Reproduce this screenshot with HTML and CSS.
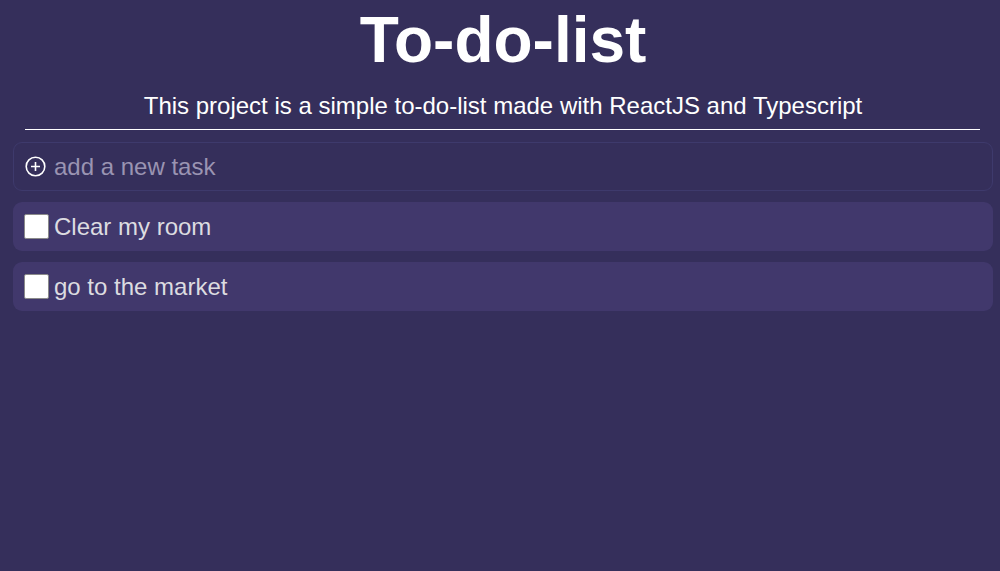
FILE: index.html
```html
<!DOCTYPE html>
<html>
<head>
<meta charset="utf-8">
<link rel="stylesheet" href="styles.css">
</head>
<body>
<div class="app">
  <header class="header">
    <h1 class="title">To-do-list</h1>
    <p class="subtitle">This project is a simple to-do-list made with ReactJS and Typescript</p>
    <div class="rule"></div>
  </header>
  <div class="list">
    <label class="new-task">
      <svg class="plus" width="21" height="21" viewBox="0 0 21 21"><circle cx="10.5" cy="10.5" r="9.3" fill="none" stroke="#fff" stroke-width="1.6"/><path d="M10.5 6v9M6 10.5h9" stroke="#fff" stroke-width="1.6"/></svg>
      <span class="placeholder">add a new task</span>
    </label>
    <div class="task"><span class="box"></span><span class="task-text">Clear my room</span></div>
    <div class="task"><span class="box"></span><span class="task-text">go to the market</span></div>
  </div>
</div>
</body>
</html>
```
FILE: styles.css
```css
html, body { margin: 0; padding: 0; }
body {
  background: #352f5b;
  font-family: "Liberation Sans", Arial, sans-serif;
  height: 571px;
  overflow: hidden;
}
.app { padding: 0 7px 0 13px; }
.header { display: flex; flex-direction: column; align-items: center; }
.title {
  margin: 0;
  padding-top: 4px;
  font-size: 64px;
  line-height: 72px;
  font-weight: bold;
  color: #fff;
  text-align: center;
}
.subtitle {
  margin: 16px 0 0;
  font-size: 24px;
  line-height: 28px;
  color: #fff;
  text-align: center;
}
.rule { align-self: stretch; margin: 9px 13px 0 12px; height: 1px; background: #fff; }
.list { display: flex; flex-direction: column; gap: 11px; margin-top: 12px; }
.new-task {
  display: flex; align-items: center; gap: 8px;
  height: 47px; padding: 0 11px;
  border: 1px solid #3e3a6c; border-radius: 9px;
  background: #352f5b;
}
.plus { flex: none; }
.placeholder { font-size: 24px; color: #9a94b2; }
.task {
  display: flex; align-items: center; gap: 5px;
  height: 49px; padding: 0 11px;
  border-radius: 9px; background: #41386c;
}
.box {
  width: 23px; height: 23px; background: #fff;
  border: 1px solid #8a8a8a; border-radius: 2px; flex: none;
}
.task-text { font-size: 24px; color: #dcdce0; }
```
